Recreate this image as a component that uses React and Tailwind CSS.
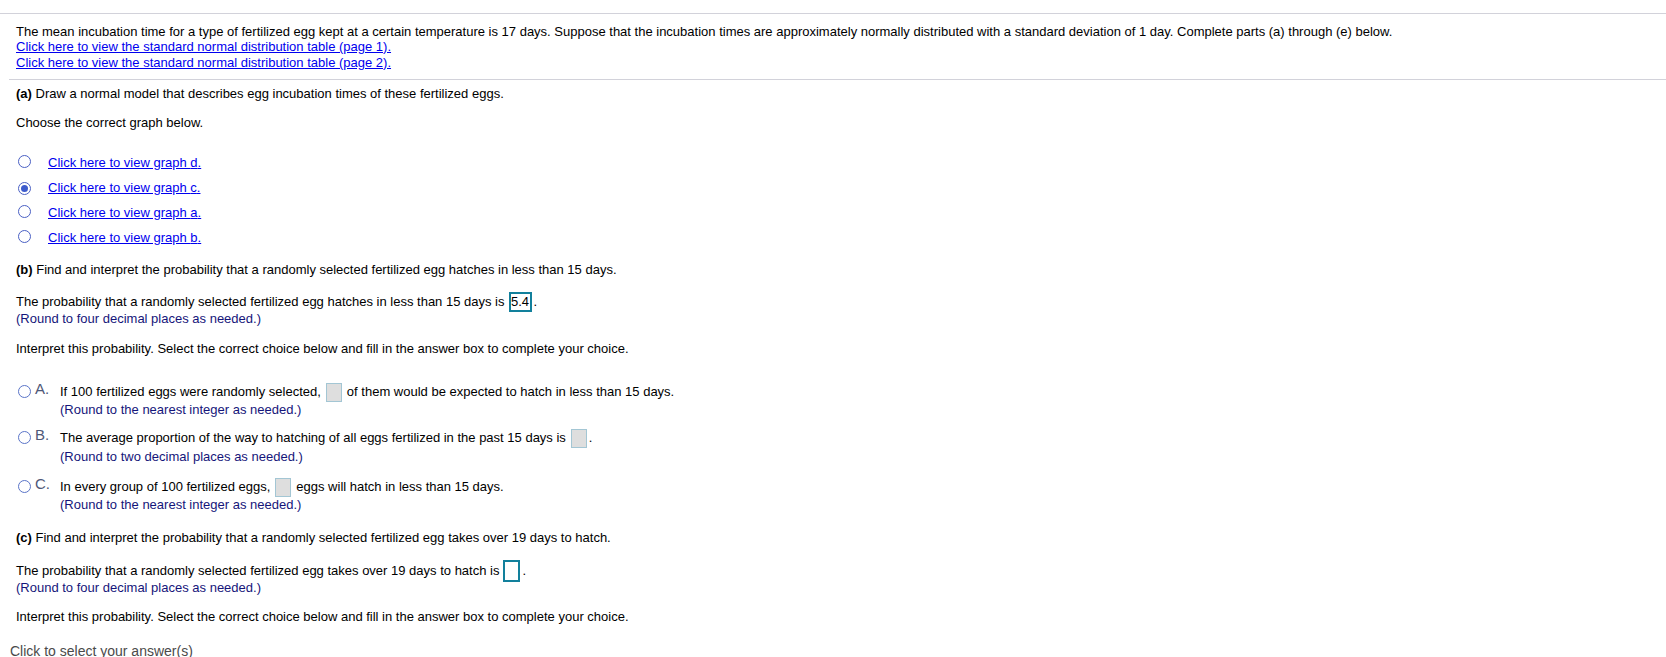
const Radio = ({ checked }) => (
  <span className="relative inline-flex h-[13px] w-[13px] shrink-0 items-center justify-center rounded-full border border-[#4a60c4] bg-white">
    {checked && <span className="h-[7px] w-[7px] rounded-full bg-[#3d5bcc]" />}
  </span>
);

const GrayBox = () => (
  <span className="mx-[5px] inline-block h-[19px] w-[16px] shrink-0 border border-[#a3c6d4] bg-[#dedede]" />
);

const Choice = ({ letter, className, children, hint }) => (
  <div className={"flex " + className}>
    <div className="flex w-[44px] shrink-0 items-start">
      <span className="ml-[2px] mt-[1px] h-[13px] w-[13px] rounded-full border border-[#5a74c8] bg-white" />
      <span className="ml-[4px] -mt-[3px] text-[15px] leading-[16px] text-[#4f5878]">{letter}</span>
    </div>
    <div className="flex flex-col">
      <div className="flex h-[16px] items-center whitespace-nowrap">{children}</div>
      {hint}
    </div>
  </div>
);

const Hint = ({ children, className = "" }) => (
  <p className={"text-[#15157a] " + className}>{children}</p>
);

export default function App() {
  const links = ["d", "c", "a", "b"];
  return (
    <div className="h-[657px] w-full overflow-hidden bg-white font-['Liberation_Sans',Arial,sans-serif] text-[13px] leading-[16px] text-black">
      <div className="pt-[13px]">
        <div className="border-t border-[#d2d2da] px-[16px] pb-[8px] pt-[10px]">
          <p className="-mb-[1px] whitespace-nowrap">
            The mean incubation time for a type of fertilized egg kept at a certain temperature is 17 days. Suppose that the incubation times are approximately normally distributed with a standard deviation of 1 day. Complete parts (a) through (e) below.
          </p>
          <a href="#" className="block w-fit text-[#0000ee] underline">
            Click here to view the standard normal distribution table (page 1).
          </a>
          <a href="#" className="block w-fit text-[#0000ee] underline">
            Click here to view the standard normal distribution table (page 2).
          </a>
        </div>
        <div className="ml-[9px] border-t border-[#d2d2da] pl-[7px] pt-[6px]">
          <p>
            <b>(a)</b> Draw a normal model that describes egg incubation times of these fertilized eggs.
          </p>
          <p className="mt-[13px]">Choose the correct graph below.</p>
          <div className="mt-[24px] flex flex-col gap-[9px]">
            {links.map((l) => (
              <div key={l} className="flex h-[16px] items-center">
                <span className="ml-[2px]">
                  <Radio checked={l === "c"} />
                </span>
                <a href="#" className="ml-[17px] text-[#0000ee] underline">
                  Click here to view graph {l}.
                </a>
              </div>
            ))}
          </div>

          <p className="mt-[16px]">
            <b>(b)</b> Find and interpret the probability that a randomly selected fertilized egg hatches in less than 15 days.
          </p>
          <div className="mt-[16px] flex h-[16px] items-center whitespace-nowrap">
            <span>The probability that a randomly selected fertilized egg hatches in less than 15 days is</span>
            <span className="ml-[4px] flex h-[20px] w-[23px] shrink-0 items-center justify-center border-2 border-[#12809c] bg-white">
              5.4
            </span>
            <span className="ml-[2px]">.</span>
          </div>
          <Hint className="mt-[1px]">(Round to four decimal places as needed.)</Hint>
          <p className="mt-[14px]">
            Interpret this probability. Select the correct choice below and fill in the answer box to complete your choice.
          </p>

          <Choice
            letter="A."
            className="mt-[27px]"
            hint={<Hint className="mt-[2px]">(Round to the nearest integer as needed.)</Hint>}
          >
            <span>If 100 fertilized eggs were randomly selected,</span>
            <GrayBox />
            <span>of them would be expected to hatch in less than 15 days.</span>
          </Choice>
          <Choice
            letter="B."
            className="mt-[12px]"
            hint={<Hint className="mt-[3px]">(Round to two decimal places as needed.)</Hint>}
          >
            <span>The average proportion of the way to hatching of all eggs fertilized in the past 15 days is</span>
            <GrayBox />
            <span className="-ml-[3px]">.</span>
          </Choice>
          <Choice
            letter="C."
            className="mt-[14px]"
            hint={<Hint className="mt-[2px]">(Round to the nearest integer as needed.)</Hint>}
          >
            <span>In every group of 100 fertilized eggs,</span>
            <GrayBox />
            <span>eggs will hatch in less than 15 days.</span>
          </Choice>

          <p className="mt-[17px]">
            <b>(c)</b> Find and interpret the probability that a randomly selected fertilized egg takes over 19 days to hatch.
          </p>
          <div className="mt-[17px] flex h-[16px] items-center whitespace-nowrap">
            <span>The probability that a randomly selected fertilized egg takes over 19 days to hatch is</span>
            <span className="ml-[4px] inline-block h-[22px] w-[17px] shrink-0 border-2 border-[#12809c] bg-white" />
            <span className="ml-[2px]">.</span>
          </div>
          <Hint className="mt-[1px]">(Round to four decimal places as needed.)</Hint>
          <p className="mt-[13px]">
            Interpret this probability. Select the correct choice below and fill in the answer box to complete your choice.
          </p>
        </div>
        <div className="mt-[18px] pl-[10px] text-[14px] text-[#4a4a4a]">Click to select your answer(s)</div>
      </div>
    </div>
  );
}
